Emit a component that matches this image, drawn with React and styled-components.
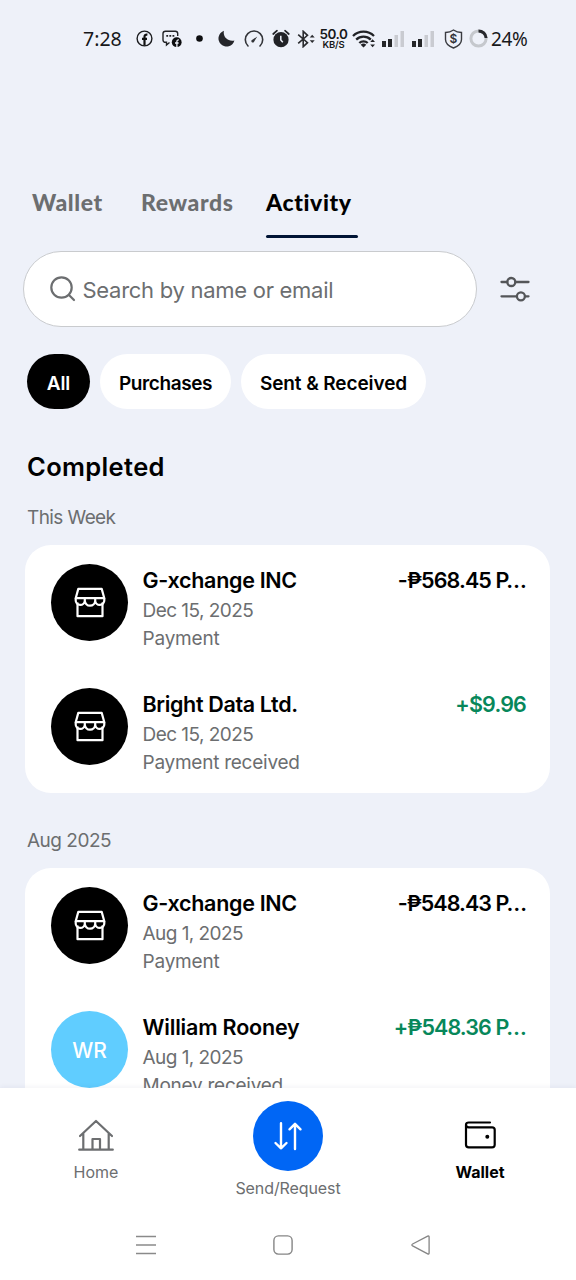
import React from "react"
import styled, { createGlobalStyle } from "styled-components"

const groups = [
  {
    title: "This Week",
    track: -0.6,
    items: [
      { name: "G-xchange INC", nameTrack: -0.3, date: "Dec 15, 2025", dateTrack: -0.55, note: "Payment", noteTrack: -0.2, amount: "-₱568.45 P…", amountTrack: -0.9 },
      { name: "Bright Data Ltd.", nameTrack: -0.35, date: "Dec 15, 2025", dateTrack: -0.55, note: "Payment received", noteTrack: -0.25, amount: "+$9.96", amountTrack: -0.85, incoming: true },
    ],
  },
  {
    title: "Aug 2025",
    track: -0.5,
    items: [
      { name: "G-xchange INC", nameTrack: -0.3, date: "Aug 1, 2025", dateTrack: -0.55, note: "Payment", noteTrack: -0.2, amount: "-₱548.43 P…", amountTrack: -0.95 },
      { name: "William Rooney", nameTrack: -0.18, date: "Aug 1, 2025", dateTrack: -0.55, note: "Money received", noteTrack: -0.25, amount: "+₱548.36 P…", amountTrack: -0.9, incoming: true, initials: "WR" },
    ],
  },
]

function Signal() {
  return (
    <svg width="22" height="16" viewBox="0 0 22 16">
      <path d="M0 10h4v6H0zM6 8h4v8H6z" fill="#252629" />
      <path d="M12.500 4h3.500v12h-3.500zM18.500 0H22v16h-3.500z" fill="#c9cbd1" />
    </svg>
  )
}

function StatusIcons() {
  return (
    <>
      <Slot $left={135.500}>
        <svg width="17" height="17" viewBox="0 0 17 17">
          <circle cx="8.500" cy="8.500" r="7.400" fill="none" stroke="#1c1d20" strokeWidth="1.400" />
          <path d="M8.500 15.500V7c0-1.700.8-2.500 2.900-2.300M6 8.900h5" fill="none" stroke="#111" strokeWidth="2.200" />
        </svg>
      </Slot>
      <Slot $left={162}>
        <svg width="20" height="18" viewBox="0 0 20 18">
          <path d="M7.500 12.500 4.500 15v-2.700H3.500C2 12.300 1 11.300 1 10V3.500C1 2 2 1.200 3.500 1.200h9.800c1.500 0 2.400.9 2.400 2.300V6" fill="none" stroke="#222326" strokeWidth="1.400" />
          <path d="M4.300 5.800h1.800M7.400 5.800h1.800M10.500 5.800h1.800" stroke="#222326" strokeWidth="1.800" />
          <circle cx="14.700" cy="12.200" r="4.900" fill="#0c0d0f" />
          <path d="M14.900 17v-5.500c0-1.300.7-1.700 2-1.600M13 13h3.600" fill="none" stroke="#eef1f9" strokeWidth="1.300" />
        </svg>
      </Slot>
      <Slot $left={196}>
        <svg width="7" height="7" viewBox="0 0 7 7">
          <circle cx="3.500" cy="3.500" r="3.300" fill="#0d0e10" />
        </svg>
      </Slot>
      <Slot $left={217.500}>
        <svg width="17" height="17" viewBox="0 0 17 17">
          <path d="M6 .8C4.500 6.500 9.500 12 16.400 10.600A8.100 8.100 0 1 1 6 .8z" fill="#25262b" />
        </svg>
      </Slot>
      <Slot $left={243.500}>
        <svg width="20" height="18" viewBox="0 0 20 18">
          <path d="M4 16A8.700 8.700 0 1 1 16 16" fill="none" stroke="#333439" strokeWidth="1.600" strokeLinecap="round" />
          <path d="m7.600 10.200 5.700-3.700-3.500 5.700a1.500 1.500 0 0 1-2.200-2z" fill="#333439" />
        </svg>
      </Slot>
      <Slot $left={271.500}>
        <svg width="18" height="19" viewBox="0 0 18 19">
          <circle cx="9" cy="10.700" r="7.600" fill="#212226" />
          <path d="M1.200 5 5 1.700M16.800 5 13 1.700" stroke="#212226" strokeWidth="1.700" strokeLinecap="round" />
          <path d="M8.800 6.800v4.200l2 2.300" fill="none" stroke="#eef1f9" strokeWidth="1.500" />
        </svg>
      </Slot>
      <Slot $left={297}>
        <svg width="18" height="18" viewBox="0 0 18 18">
          <path d="m1.200 4.700 9.300 8-4.300 4V1.300l4.300 4-9.300 8" fill="none" stroke="#2a2b2f" strokeWidth="1.600" />
          <path d="m12.700 7.500 2.500-2.800 2.500 2.800zM12.700 10.300l2.500 2.800 2.500-2.800z" fill="#2a2b2f" />
        </svg>
      </Slot>
      <Slot $left={319.500}>
        <Speed>
          <b>50.0</b>
          <small>KB/S</small>
        </Speed>
      </Slot>
      <Slot $left={352}>
        <svg width="25" height="18" viewBox="0 0 25 18">
          <g fill="none" stroke="#212226" strokeWidth="2.300">
            <path d="M1 6a15 15 0 0 1 21 0" />
            <path d="M4.200 9.600a10.500 10.500 0 0 1 14.600 0" />
            <path d="M7.300 13a6 6 0 0 1 8.400 0" />
          </g>
          <path d="m8.700 14.700 2.800 2.900 2.800-2.900a4.200 4.200 0 0 0-5.600 0z" fill="#212226" />
          <path d="m18.200 12 2.400-2.700L23 12zM18.200 14.500l2.400 2.700 2.400-2.700z" fill="#212226" />
        </svg>
      </Slot>
      <Slot $left={381.500}><Signal /></Slot>
      <Slot $left={412}><Signal /></Slot>
      <Slot $left={443.500}>
        <svg width="19" height="20" viewBox="0 0 19 20">
          <path d="M9.500 1c2.500 1.700 5 2.400 8 2.500v7c0 4-3.500 6.800-8 8.500-4.500-1.700-8-4.500-8-8.500v-7C4.500 3.400 7 2.700 9.500 1z" fill="none" stroke="#3a3b40" strokeWidth="1.400" />
          <text x="9.500" y="14.300" textAnchor="middle" fontFamily="Inter, sans-serif" fontSize="12" fontWeight="600" fill="#303135">$</text>
        </svg>
      </Slot>
      <Slot $left={469}>
        <svg width="19" height="19" viewBox="0 0 19 19">
          <circle cx="9.500" cy="9.500" r="7.600" fill="none" stroke="#c5c8cd" strokeWidth="3" />
          <path d="M9.500 1.900a7.600 7.600 0 0 1 7.600 7.100" fill="none" stroke="#27282c" strokeWidth="3" />
        </svg>
      </Slot>
    </>
  )
}

function StoreIcon() {
  return (
    <svg width="32" height="32" viewBox="0 0 32 32" fill="none" stroke="#fff" strokeWidth="2.200" strokeLinejoin="round">
      <path d="M3.500 15.500v13.700h25V15.500M4.300 1.900h23.400l2.600 9.300H1.700z" />
      <path d="M1.700 11.200v2a4.500 4.500 0 0 0 9.100.3 5 5 0 0 0 10.400 0 4.500 4.500 0 0 0 9.100-.3v-2M10.800 11.200v3M21.200 11.200v3" />
    </svg>
  )
}

function Transaction({ item }) {
  return (
    <Row>
      <Avatar $person={item.initials}>{item.initials || <StoreIcon />}</Avatar>
      <Details>
        <Name $track={item.nameTrack}>{item.name}</Name>
        <Meta $track={item.dateTrack}>{item.date}</Meta>
        <Meta $track={item.noteTrack}>{item.note}</Meta>
      </Details>
      <Amount $incoming={item.incoming} $track={item.amountTrack}>{item.amount}</Amount>
    </Row>
  )
}

function App() {
  return (
    <Screen>
      <GlobalStyle />
      <StatusBar>
        <Slot $left={83}><Clock>7:28</Clock></Slot>
        <StatusIcons />
        <Slot $left={491}><Battery>24%</Battery></Slot>
      </StatusBar>

      <Content>
        <Tabs>
          <Tab $width={71}>Wallet</Tab>
          <Tab $width={87}>Rewards</Tab>
          <Tab $width={92} $active>Activity</Tab>
        </Tabs>

        <SearchRow>
          <SearchBox>
            <svg width="28" height="28" viewBox="0 0 28 28" fill="none" stroke="#6c6e70" strokeWidth="2.200" strokeLinecap="round">
              <circle cx="12.500" cy="12.500" r="10.200" />
              <path d="m20 20 5 5" />
            </svg>
            <span>Search by name or email</span>
          </SearchBox>
          <svg width="30" height="26" viewBox="0 0 30 26" fill="none" stroke="#545659" strokeWidth="2.300" strokeLinecap="round">
            <path d="M1.500 6h5.700M15.500 6h13M1.500 20.300h15.200M25 20.300h3.500" />
            <circle cx="11.300" cy="6" r="4" />
            <circle cx="20.900" cy="20.300" r="4" />
          </svg>
        </SearchRow>

        <Chips>
          <Chip $width={63} $active>All</Chip>
          <Chip $width={131} $track={-0.4}>Purchases</Chip>
          <Chip $width={185}>Sent &amp; Received</Chip>
        </Chips>

        <Heading>Completed</Heading>
        {groups.map(group => (
          <section key={group.title}>
            <GroupTitle $track={group.track}>{group.title}</GroupTitle>
            <Card>
              {group.items.map(item => <Transaction key={item.name} item={item} />)}
            </Card>
          </section>
        ))}
      </Content>

      <BottomNav>
        <NavItem>
          <svg width="36" height="34" viewBox="0 0 36 34" fill="none" stroke="#6c6e70" strokeWidth="2.200" strokeLinecap="round" strokeLinejoin="round">
            <path d="M1.200 31.700h33.600M2 18 18 3l16 15M5.300 15.500v16M30.700 15.500v16M14.500 31.500V21h7.500v10.500" />
          </svg>
          <NavLabel>Home</NavLabel>
        </NavItem>
        <NavItem $raised>
          <SendButton>
            <svg width="30" height="30" viewBox="0 0 30 30" fill="none" stroke="#fff" strokeWidth="2.400" strokeLinecap="round" strokeLinejoin="round">
              <path d="M8 2.200v25M2.500 22 8 27.300l5.500-5.300M22 28V3M16.500 8.300 22 2.800l5.500 5.500" />
            </svg>
          </SendButton>
          <NavLabel $track={-0.1}>Send/Request</NavLabel>
        </NavItem>
        <NavItem>
          <svg width="32" height="34" viewBox="0 0 32 34" fill="none" stroke="#000" strokeWidth="2.200" strokeLinecap="round" strokeLinejoin="round">
            <path d="M26 4.500H4.700C3 4.500 2 5.300 2 6.800v20c0 1.600 1 2.500 2.700 2.500H28c1.700 0 2.700-1 2.700-2.600V11.800c0-1.600-1-2.500-2.700-2.500H4.700C3 9.300 2 8.500 2 6.800" />
            <circle cx="23.300" cy="18.800" r=".9" fill="#000" />
          </svg>
          <NavLabel $active>Wallet</NavLabel>
        </NavItem>
      </BottomNav>

      <SystemBar>
        <svg width="20" height="20" viewBox="0 0 20 20" stroke="#8a8a8a" strokeWidth="1.500">
          <path d="M0 1.500h20M0 10h20M0 18.500h20" />
        </svg>
        <svg width="20" height="20" viewBox="0 0 20 20" fill="none" stroke="#858585" strokeWidth="1.400">
          <rect x=".9" y=".9" width="18.200" height="18.200" rx="4.500" />
        </svg>
        <svg width="20" height="20" viewBox="0 0 20 20" fill="none" stroke="#858585" strokeWidth="1.300" strokeLinejoin="round">
          <path d="M16.700 1.200 1.600 9c-1 .5-1 1.400 0 1.900l15.100 7.900c.9.400 1.400.1 1.400-.8V2c0-.9-.5-1.200-1.400-.8z" />
        </svg>
      </SystemBar>
    </Screen>
  )
}

export default App

const GlobalStyle = createGlobalStyle`
  * {
    box-sizing: border-box;
  }

  body {
    margin: 0;
    background: #eef1f9;
    font-family: Inter, "Liberation Sans", sans-serif;
  }

  svg {
    display: block;
    flex: none;
  }
`

const Screen = styled.div`
  width: 576px;
  height: 1280px;
  display: flex;
  flex-direction: column;
  overflow: hidden;
  background: #eef1f9;
`

// every slot shares one grid cell, so each icon keeps its own offset
const StatusBar = styled.div`
  height: 77px;
  flex: none;
  display: grid;
  align-items: center;
`

const Slot = styled.div`
  grid-area: 1 / 1;
  justify-self: start;
  margin-left: ${props => props.$left}px;
`

const Clock = styled.div`
  font-family: "Noto Sans", sans-serif;
  font-size: 19.500px;
  line-height: 24px;
  color: #17181a;
`

const Battery = styled(Clock)`
  font-size: 19px;
  letter-spacing: -0.4px;
`

const Speed = styled.div`
  width: 28px;
  display: flex;
  flex-direction: column;
  align-items: center;
  color: #17181a;

  b {
    font-size: 13.500px;
    font-weight: 600;
    line-height: 12px;
    letter-spacing: -0.4px;
  }

  small {
    font-size: 9.500px;
    font-weight: 600;
    line-height: 10px;
    letter-spacing: -0.2px;
  }
`

const Content = styled.main`
  height: 1011px;
  flex: none;
  overflow: hidden;
  padding-top: 103px;
`

const Tabs = styled.nav`
  display: flex;
  gap: 38px;
  padding-left: 32px;
  height: 58px;
`

const Tab = styled.div`
  width: ${props => props.$width}px;
  padding-top: 8px;
  font-family: Lato, sans-serif;
  font-size: 23px;
  font-weight: 900;
  line-height: 28px;
  letter-spacing: 0.6px;
  white-space: nowrap;
  color: ${props => (props.$active ? "#000" : "#6c6e70")};

  &::after {
    content: "";
    display: ${props => (props.$active ? "block" : "none")};
    height: 3px;
    margin-top: 19px;
    border-radius: 2px;
    background: #001435;
  }
`

const SearchRow = styled.div`
  display: flex;
  align-items: center;
  gap: 23px;
  margin-top: 13px;
  padding-left: 22.500px;
`

const SearchBox = styled.div`
  width: 454px;
  height: 76px;
  display: flex;
  align-items: center;
  gap: 6px;
  padding-left: 25px;
  border: 1.500px solid #c9cbce;
  border-radius: 38px;
  background: #fff;
  color: #6c6e70;
  font-size: 22px;
  letter-spacing: -0.28px;

  span {
    padding-top: 2px;
  }
`

const Chips = styled.div`
  display: flex;
  gap: 10px;
  margin: 27px 0 0 27px;
`

const Chip = styled.div`
  width: ${props => props.$width}px;
  height: 55px;
  display: flex;
  align-items: center;
  justify-content: center;
  padding-top: 3px;
  border-radius: 28px;
  background: ${props => (props.$active ? "#000" : "#fff")};
  color: ${props => (props.$active ? "#fff" : "#000")};
  font-size: 19px;
  font-weight: 570;
  letter-spacing: ${props => props.$track || -0.1}px;
  white-space: nowrap;
`

const Heading = styled.h2`
  margin: 43px 0 0 27px;
  font-size: 25.500px;
  font-weight: 570;
  line-height: 30px;
  letter-spacing: 0.35px;
`

const GroupTitle = styled.h3`
  margin: 0;
  padding: 23px 0 14px 27px;
  font-size: 19px;
  font-weight: 400;
  line-height: 26px;
  letter-spacing: ${props => props.$track}px;
  color: #6c6e70;
`

const Card = styled.div`
  width: 525px;
  height: 248px;
  margin-left: 25px;
  margin-bottom: 12px;
  padding: 19px 24px 0 26px;
  border-radius: 26px;
  background: #fff;
`

const Row = styled.div`
  display: flex;
  align-items: flex-start;
  height: 124px;
`

const Avatar = styled.div`
  width: 77px;
  height: 77px;
  flex: none;
  display: flex;
  align-items: center;
  justify-content: center;
  padding-top: ${props => (props.$person ? 2 : 0)}px;
  border-radius: 50%;
  background: ${props => (props.$person ? "#60cdff" : "#000")};
  color: #fff;
  font-size: 21px;
  font-weight: 500;
`

const Details = styled.div`
  flex: 1;
  margin-left: 14.500px;
  padding-top: 1px;
`

const Name = styled.div`
  margin-bottom: 2px;
  font-size: 21.500px;
  font-weight: 600;
  line-height: 30px;
  letter-spacing: ${props => props.$track}px;
  white-space: nowrap;
`

const Meta = styled.div`
  font-size: 19px;
  line-height: 28px;
  letter-spacing: ${props => props.$track}px;
  color: #6c6e70;
`

const Amount = styled.div`
  padding-top: 1px;
  font-size: 21.500px;
  font-weight: 600;
  line-height: 30px;
  letter-spacing: ${props => props.$track}px;
  white-space: nowrap;
  color: ${props => (props.$incoming ? "#07875a" : "#000")};
`

const BottomNav = styled.nav`
  position: relative;
  height: 132px;
  flex: none;
  display: grid;
  grid-template-columns: repeat(3, 1fr);
  background: #fff;
  box-shadow: 0 -1px 5px rgba(30, 40, 80, 0.06);
`

const NavItem = styled.div`
  display: flex;
  flex-direction: column;
  align-items: center;
  gap: ${props => (props.$raised ? 7 : 10)}px;
  padding-top: ${props => (props.$raised ? 13 : 30)}px;
`

const NavLabel = styled.div`
  font-size: 16px;
  line-height: 21px;
  font-weight: ${props => (props.$active ? 700 : 400)};
  letter-spacing: ${props => props.$track || 0}px;
  color: ${props => (props.$active ? "#000" : "#6c6e70")};
`

const SendButton = styled.div`
  width: 70px;
  height: 70px;
  display: flex;
  align-items: center;
  justify-content: center;
  border-radius: 50%;
  background: #0066f5;
`

const SystemBar = styled.div`
  position: relative;
  flex: 1;
  display: flex;
  justify-content: center;
  gap: 117.500px;
  padding-top: 15px;
  padding-right: 10px;
  background: #fff;
`
